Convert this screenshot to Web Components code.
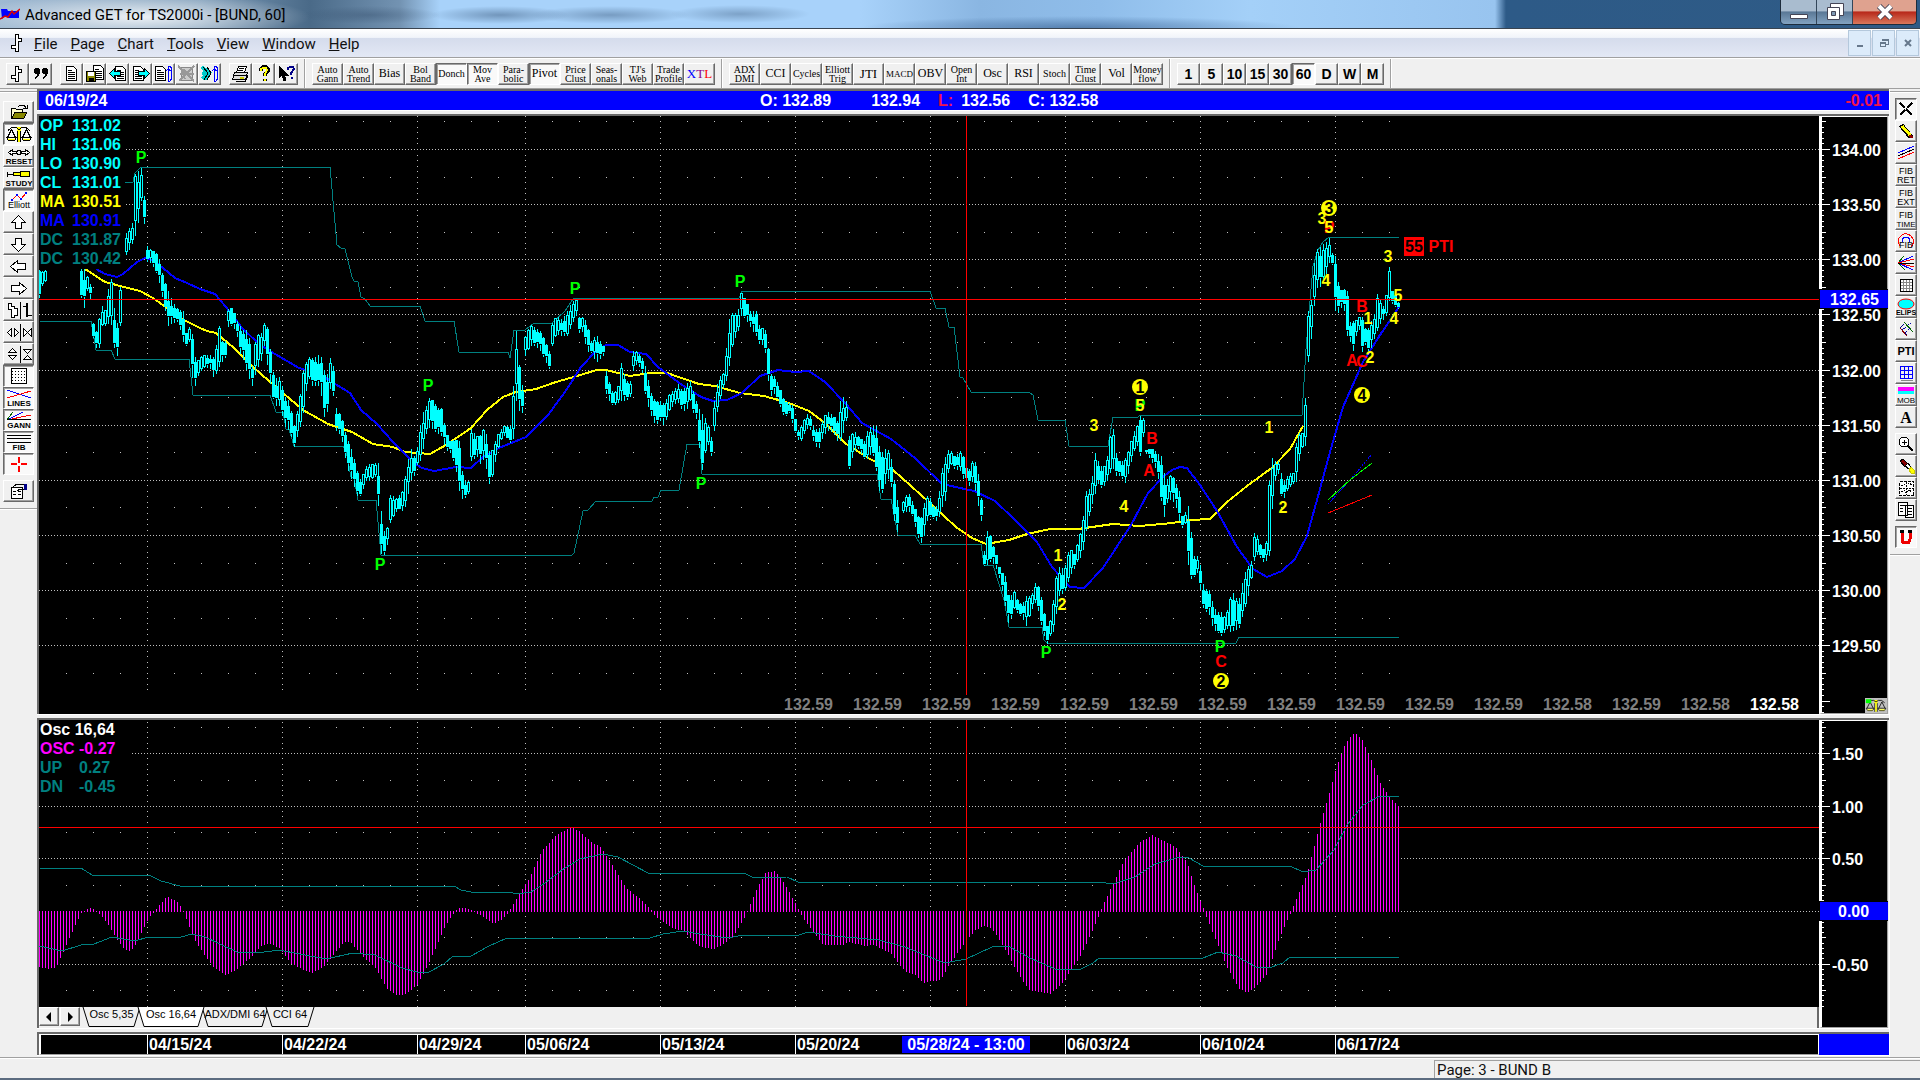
<!DOCTYPE html>
<html lang="en">
<head>
<meta charset="utf-8">
<title>Advanced GET for TS2000i - [BUND, 60]</title>
<style>
  html, body { margin: 0; height: 100%; background: #f0f0f0; overflow: hidden; }
</style>
</head>
<body>
<get-app></get-app>

<script>
/* ---------- icons ---------- */
const svg = (w, h, body) =>
  `<svg width="${w}" height="${h}" viewBox="0 0 ${w} ${h}" shape-rendering="crispEdges" fill="none" stroke="#000">${body}</svg>`;

const docShape = '<path d="M3.5 1.5h7l3 3v11h-10z" fill="#fff"/><path d="M5 5.5h4M5 7.5h7M5 9.5h7M5 11.5h7M5 13.5h7"/>';
const scales = '<path d="M12 2h4v4h-4z" fill="#ff0" stroke="none"/><path d="M3 5.5l4-3h4l3 2 3-2h4l4 3M12.5 6v11M15.5 6v11"/><path d="M14 5v12" stroke="#ff0" stroke-width="2"/><path d="M6.500 4.500L2.500 12.500M6.500 4.500l4 8M21.500 4.500l-4 8M21.500 4.500l4 8"/><path d="M1.500 12.500h10l-2 3h-6zM16.500 12.500h10l-2 3h-6z" fill="#ffc"/><path d="M3 14.500h7M18 14.500h7" stroke="#ff0"/>';
const barIcon = '<path d="M9.5 1.5h3v3h3v3h-3v9h-3v-3h-4v-3h4z" fill="#fff"/>';
const txt = (s, y, size, color = '#000', weight = 400) =>
  `<text x="50%" y="${y}" text-anchor="middle" stroke="none" fill="${color}" font-family="Liberation Sans, sans-serif" font-size="${size}" font-weight="${weight}">${s}</text>`;

const ICONS = {
  bar: svg(20, 18, `<g transform="translate(-2 0)">${barIcon}</g>`),
  quotes: svg(20, 18, '<g stroke="none" fill="#000"><circle cx="6" cy="6" r="3"/><path d="M9 6q0 6-5 8v-2q3-2 2-5z"/><circle cx="14" cy="6" r="3"/><path d="M17 6q0 6-5 8v-2q3-2 2-5z"/></g>'),
  page: svg(17, 18, docShape),
  save: svg(20, 18, `<g transform="translate(5 -1)">${docShape}</g><path d="M1.500 6.500h9v10h-9z" fill="#880"/><path d="M3 7h6v4H3z" fill="#fff" stroke="none"/><path d="M4 13h5v3H4z" fill="#000" stroke="none"/>`),
  back: svg(20, 18, `<g transform="translate(4 0)">${docShape}</g><path d="M1.500 8.500l5-5v3h6v4h-6v3z" fill="#0ff"/>`),
  next: svg(20, 18, `<g transform="translate(-1 0)">${docShape}</g><path d="M18.500 8.500l-5-5v3h-6v4h6v3z" fill="#0ff"/>`),
  turn: svg(20, 18, `<g transform="translate(-2 0)">${docShape}</g><path d="M14.500 1v16M17.500 4v9M14 1h2l2 3M14 16h2l2-3M12 6l2-2 3 2" stroke="#00f"/>`),
  scratch: svg(20, 18, '<path d="M4.500 2.500h11v13h-11z" fill="#ccc" stroke="#888"/><path d="M1 1l16 15M17 1L2 16M3 9h14M6 4l8 9M5 6l3 8" stroke="#999" stroke-width="2"/>'),
  turn2: svg(20, 18, '<path d="M2 2l6 6-6 6M6 3l4 5-5 7M2 8h8M4 4v10" stroke="#0cc" stroke-width="3"/><path d="M3 2l5 6-4 7M7 2l4 6-4 7"/><path d="M14.500 1v16M17.500 4v9M14 1h2l2 3M14 16h2l2-3M12 6l2-2 3 2" stroke="#00f"/>'),
  print: svg(20, 18, '<path d="M7.500 1.500h8l-2 6h-8z" fill="#fff"/><path d="M3.500 7.500h13l-2 7h-13z" fill="#ddd"/><path d="M3 10.500h12M8 3.500h5M7 5.500h5M5 16.500h9l3-6"/><path d="M9 13h4" stroke="#cc0" stroke-width="2"/>'),
  help: svg(16, 18, '<path d="M5 6V4l2-2h3l2 2v2l-3 3v2M8.500 14v2" stroke-width="4"/><path d="M5 6V4l2-1h3l1 2-2 4v2M8.500 14v2" stroke="#ff0" stroke-width="2"/>'),
  what: svg(20, 18, '<path d="M2 1v12l3-3 2 6 2-1-2-5h4z" fill="#000"/><path d="M11 5V3l2-1h3l1 2-3 4v2M14.500 12v2" stroke="#008" stroke-width="2"/>'),

  open: svg(24, 18, '<path d="M4.500 5.500h4l1 1h6v8h-11z" fill="#ffc"/><path d="M5 15l3-6h12l-3 6z" fill="#880"/><path d="M11 4l2-2h4l2 3M16 5h4V2"/>'),
  scales: svg(28, 18, scales),
  reset: svg(28, 18, '<path d="M3.500 5.500l4-3v2h4v2h-4v2zM24.500 5.500l-4-3v2h-4v2h4v2z" fill="#fff"/><circle cx="14" cy="5.500" r="2"/>' + txt('RESET', 17, 8, '#000', 700)),
  study: svg(28, 18, '<path d="M2 5.500h8"/><path d="M8.500 3.500h7v3h-7zM15.500 2.500h9v5h-9z" fill="#ff0"/><path d="M2.500 3v5"/>' + txt('STUDY', 17, 8, '#000', 700)),
  elliott: svg(28, 18, '<path d="M7 9l5-5 4 4 5-6" stroke="#f00"/><path d="M6 8h2v2H6zM11 3h2v2h-2zM15 7h2v2h-2zM20 1h2v2h-2z" fill="#00f" stroke="none"/>' + txt('Elliott', 17, 9)),
  up: svg(24, 18, '<path d="M11.500 2.500l7 7h-4v6h-6v-6h-4z" fill="#fff"/>'),
  down: svg(24, 18, '<path d="M11.500 16.500l7-7h-4v-6h-6v6h-4z" fill="#fff"/>'),
  left: svg(24, 18, '<path d="M3.500 9.500l7-6v3h8v6h-8v3z" fill="#fff"/>'),
  right: svg(24, 18, '<path d="M19.500 9.500l-7-6v3h-8v6h8v3z" fill="#fff"/>'),
  bars: svg(28, 18, '<path d="M3.500 2.500h3v3h3v2h3v7h-3v2h-3v-8h-3z" fill="#fff"/><path d="M15.500 1v17"/><path d="M22 2v14" stroke-width="2"/><path d="M18 5.500h4M23 14.500h4"/>'),
  squeeze: svg(28, 18, '<path d="M6.500 5.500v8l-4-4zM9.500 5.500v8l4-4zM18.500 5.500v8l4-4zM26.500 5.500v8l-4-4z" fill="#fff"/><path d="M15.500 1v17"/>'),
  squeezeV: svg(28, 18, '<path d="M3.500 7.500h8l-4-4zM3.500 10.500h8l-4 4zM18.500 4.500h8l-4 4zM18.500 14.500h8l-4-4z" fill="#fff"/><path d="M15.500 1v17"/>'),
  dots: svg(20, 18, '<path d="M2.500 1.500h15v15h-15z" fill="#fff"/><path d="M3 4.500h14M3 7.500h14M3 10.500h14M3 13.500h14" stroke-dasharray="1 2"/>'),
  lines: svg(28, 18, '<path d="M2 1l24 8" stroke="#00f"/><path d="M2 9L26 2" stroke="#f00"/>' + txt('LINES', 17, 8, '#000', 700)),
  gann: svg(28, 18, '<path d="M2 9L8 1" stroke="#060"/><path d="M2 9L18 1" stroke="#00f"/><path d="M2 9l24-5" stroke="#f00"/><path d="M2 8.500h24"/>' + txt('GANN', 17, 8, '#000', 700)),
  fib: svg(28, 18, '<path d="M2 2.500h24M2 5.500h24M2 9.500h24"/>' + txt('FIB', 17, 8, '#000', 700)),
  cross: svg(20, 18, '<path d="M10 2v6M10 11v6M2 9h6M12 9h6" stroke="#f00" stroke-width="2"/>'),
  props: svg(24, 18, '<path d="M4.500 5.500h11v11h-11z" fill="#fff"/><path d="M6 9.500h3M6 12.500h3M11 9.500h3M11 12.500h3M6 5l4-3h7v5h-4l-3 2"/><path d="M17 2h2v5h-2z" fill="#008" stroke="#008"/>'),

  crosshair: svg(16, 18, '<path d="M2 3l5 5M14 3L9 8M2 15l5-5M14 15l-5-5" stroke-width="2"/><path d="M8 8v2" stroke-width="1"/>'),
  pencil: svg(16, 18, '<path d="M3 3l10 12" stroke-width="5"/><path d="M4 4l8 9" stroke="#ff0" stroke-width="3"/><path d="M12 13l2 3" stroke="#800" stroke-width="3"/>'),
  channel: svg(18, 18, '<path d="M1 9l16-7" stroke="#00f"/><path d="M1 12l16-7"/><path d="M1 15l16-7" stroke="#f00"/>'),
  fibRet: svg(20, 19, txt('FIB', 8, 9) + txt('RET', 17, 9)),
  fibExt: svg(20, 19, txt('FIB', 8, 9) + txt('EXT', 17, 9)),
  fibTime: svg(20, 19, txt('FIB', 8, 9) + txt('TIME', 17, 8)),
  fibArc: svg(18, 18, '<path d="M3 14Q-1 7 5 3q5-3 9 1 5 5 0 11" stroke="#f00"/><path d="M5 10q0-5 4-5t4 5" stroke="#00f"/>' + txt('FIB', 16, 9)),
  fan: svg(18, 18, '<path d="M1 9L7 2M1 9l7 7" stroke="#060"/><path d="M1 9l15-7M1 9l15 7" stroke="#00f"/><path d="M1 9l16-4M1 9l16 4" stroke="#f00"/><path d="M1 9.500h16"/>'),
  grid: svg(16, 18, '<path d="M2.500 3.500h12v12h-12z" fill="#fff"/><path d="M5.500 4v11M8.500 4v11M11.500 4v11M3 6.500h11M3 9.500h11M3 12.500h11" stroke="#888"/>'),
  elips: svg(20, 18, '<ellipse cx="10" cy="6" rx="8" ry="5" fill="#0ff" stroke="#f00" shape-rendering="auto"/>' + txt('ELIPS', 17, 7, '#000', 700)),
  fork: svg(18, 18, '<path d="M3 8l4-4M3 8l7 7" stroke="#008"/><path d="M7 2l9 10" stroke="#060"/><path d="M3 8l7 8" stroke="#800"/><path d="M5 10l9-7M8 13l6-6" stroke="#00a" stroke-dasharray="1 1"/>'),
  pti: svg(20, 18, txt('PTI', 13, 11, '#000', 700)),
  blueGrid: svg(18, 18, '<path d="M3.500 2.500h12v12h-12zM7.500 3v11M11.500 3v11M4 6.500h11M4 10.500h11" stroke="#00f"/><path d="M4 16.500h12" stroke="#888"/>'),
  mob: svg(20, 18, '<path d="M2 1h16v4H2z" fill="#f0f" stroke="none"/><path d="M2 5h16v3H2z" fill="#0ff" stroke="none"/>' + txt('MOB', 17, 8)),
  text: svg(18, 18, '<text x="9" y="15" text-anchor="middle" stroke="none" fill="#000" font-family="Liberation Serif, serif" font-weight="700" font-size="16">A</text>'),
  zoom: svg(18, 18, '<circle cx="7" cy="7" r="5" fill="#fff"/><path d="M5 7.500h5M7.500 5v5"/><path d="M11 11l5 5" stroke-width="2"/>'),
  eraser: svg(18, 18, '<path d="M3 4l3-2 5 5-3 3z" fill="#800"/><path d="M8 9l3-3 3 4-2 2z" fill="#fff"/><path d="M12 13l2-3 3 3v3h-3z" fill="#ff0" stroke="#cc0"/>'),
  tiles: svg(18, 18, '<path d="M2.500 2.500h14v14h-14z" fill="#fff" stroke-dasharray="3 1"/><path d="M4 7l3-2 2 2 3-3 3 2M4 13l3-2 2 3 3-3 3 2M9.500 3v13M3 9.500h13" stroke-dasharray="2 1"/>'),
  copy: svg(18, 18, '<path d="M1.500 1.500h9v13h-9zM8.500 4.500h8v12h-8z" fill="#fff"/><path d="M3 5l3-1 3 1M3 8l3-1M3 11l3-1M10 8l5-1M10 11l5-1M10 14l5-1"/>'),
  magnet: svg(18, 18, '<path d="M5 4v7q0 4 4 4t4-4V4" stroke="#e00" stroke-width="3"/><path d="M3 3h4M11 3h4" stroke-width="3"/>')
};

/* ---------- base ---------- */
class GetElement extends HTMLElement {
  constructor() {
    super();
    const t = document.createElement('template');
    t.innerHTML = this.template();
    this.attachShadow({ mode: 'open' }).appendChild(t.content.cloneNode(true));
  }
  $(sel) { return this.shadowRoot.querySelector(sel); }
}

/* ---------- toolbar button ---------- */
class ToolButton extends GetElement {
  template() {
    return `
    <style>
      :host { display: block; width: 31px; height: 22px; }
      :host([size="small"]) { width: 23px; }
      :host([size="side"]) { width: 22px; }
      button {
        box-sizing: border-box; width: 100%; height: 100%; margin: 0; padding: 0;
        display: flex; align-items: center; justify-content: center;
        overflow: hidden; color: #000; background: #f0f0f0; text-align: center;
        font: 10px/9px "Liberation Serif", serif;
        border: 1px solid; border-color: #fff #696969 #696969 #fff;
        box-shadow: inset -1px -1px #a0a0a0;
      }
      :host([size="small"]) button { font: bold 14px/16px "Liberation Sans", sans-serif; }
      :host([pressed]) button {
        background: #f9f9f9; border-color: #696969 #fff #fff #696969; box-shadow: inset 1px 1px #a0a0a0;
      }
    </style>
    <button type="button"><slot></slot></button>`;
  }
  connectedCallback() {
    const b = this.$('button');
    b.setAttribute('aria-label', this.getAttribute('label') || '');
    if (this.hasAttribute('pressed')) b.setAttribute('aria-pressed', 'true');
  }
}
customElements.define('tool-button', ToolButton);

const iconButtons = (list, size = '') => list.map(name => {
  if (name === '|') return '<i class="gap"></i>';
  const on = name.startsWith('*');
  const key = name.replace('*', '');
  return `<tool-button label="${key}" ${size && `size="${size}"`} ${on ? 'pressed' : ''}>${ICONS[key]}</tool-button>`;
}).join('');

const textButtons = (list, size = '') => list.map(s => {
  const on = s.startsWith('*');
  const label = s.replace('*', '');
  return `<tool-button label="${label.replace(/<[^>]+>/g, '').replace('~', ' ')}" ${size && `size="${size}"`} ${on ? 'pressed' : ''}><span>${label.replace('~', '<br>')}</span></tool-button>`;
}).join('');

/* ---------- title bar ---------- */
class TitleBar extends GetElement {
  template() {
    return `
    <style>
      :host {
        display: flex; height: 28px; border-bottom: 1px solid #3a4450; align-items: center;
        font: 15px/24px Roboto, sans-serif; color: #000;
        background:
          radial-gradient(ellipse 170px 24px at 140px 17px, rgba(255,255,255,.85), rgba(255,255,255,0)),
          radial-gradient(ellipse 70px 9px at 370px 15px, rgba(50,75,105,.4), transparent),
          radial-gradient(ellipse 70px 9px at 500px 15px, rgba(60,90,125,.5), transparent),
          radial-gradient(ellipse 80px 9px at 610px 15px, rgba(60,90,125,.45), transparent),
          radial-gradient(ellipse 70px 9px at 740px 14px, rgba(60,90,125,.4), transparent),
          radial-gradient(ellipse 220px 12px at 1080px 28px, rgba(40,80,130,.55), transparent),
          linear-gradient(90deg, #9fb9d2 0, #7d9cb8 200px, #4a6a88 310px, #7393b2 400px, #a8d2fa 440px, #a8d2fa 860px, #8ab6e2 980px, #8fbdea 1100px, #a4d0f8 1250px, #98c4ef 1495px, #2d5a87 1506px, #2f5b86 100%);
      }
      svg { margin-right: 5px; }
      h1 { flex: 1; margin: 0; padding-top: 2px; font: inherit; }
      .win { display: flex; align-self: flex-start; height: 24px; margin-right: 3px; border: 1px solid #1d2c3c; border-top: 0; border-radius: 0 0 5px 5px; overflow: hidden; }
      button { padding: 0; border: 0; border-right: 1px solid #33465a; width: 36px; background: linear-gradient(#a9bccf 0 45%, #5a7896 50%, #83a3c1); display: flex; align-items: center; justify-content: center; }
      .win svg { margin: 0; }
      button.x { width: 63px; border: 0; background: linear-gradient(#dfa28f 0 45%, #b8281a 50%, #d9785c); }
    </style>
    <svg width="20" height="14" viewBox="0 0 20 14"><path d="M1 2h6l1 2h11v7H8l-3-2-3 3z" fill="#00f"/><path d="M0 12l5-3 3 1 4-6 2 3 6-5" stroke="#d00" stroke-width="1.500" fill="none"/></svg>
    <h1>Advanced GET for TS2000i - [BUND, 60]</h1>
    <div class="win">
      <button type="button" aria-label="Minimize"><svg width="20" height="16"><path d="M1.500 10.500h17v4h-17z" fill="#fff" stroke="#445"/></svg></button>
      <button type="button" aria-label="Restore"><svg width="22" height="20"><path d="M6.500 1.500h13v12h-13z" fill="#fff" stroke="#445"/><path d="M3.500 5.500h12v12h-12z" fill="#fff" stroke="#445"/><path d="M7.500 9.500h4v4h-4z" fill="#7f9ab5" stroke="#445"/></svg></button>
      <button type="button" class="x" aria-label="Close"><svg width="22" height="18"><path d="M5 3l12 12M17 3L5 15" stroke="#445" stroke-width="6"/><path d="M5 3l12 12M17 3L5 15" stroke="#fff" stroke-width="4"/></svg></button>
    </div>`;
  }
}
customElements.define('title-bar', TitleBar);

/* ---------- menu ---------- */
class MenuBar extends GetElement {
  template() {
    const items = ['File', 'Page', 'Chart', 'Tools', 'View', 'Window', 'Help'];
    return `
    <style>
      :host {
        display: flex; height: 28px; border-bottom: 1px solid #a0a0a0; align-items: center;
        background: linear-gradient(#fff 0, #f1f4fa 30%, #d5dcec 34%, #e3e8f5 100%);
      }
      svg.mdi { margin: 0 8px 0 7px; }
      nav { flex: 1; display: flex; gap: 13px; padding-top: 2px; }
      nav button { padding: 0; border: 0; background: none; color: #111; font: 15px/24px Roboto, sans-serif; }
      .mdi-win { display: flex; gap: 1px; margin-right: 1px; }
      .mdi-win button { width: 23px; height: 26px; padding: 0; border: 1px solid #b4c8dc; background: #dcebfa; display: flex; align-items: center; justify-content: center; }
    </style>
    <svg class="mdi" width="19" height="20" viewBox="0 0 19 20" shape-rendering="crispEdges"><path d="M8.500 1.500h3v4h3v3h-3v10h-3v-3h-4v-3h4z" fill="#fff" stroke="#000"/></svg>
    <nav>${items.map(s => `<button type="button"><u>${s[0]}</u>${s.slice(1)}</button>`).join('')}</nav>
    <div class="mdi-win">
      <button type="button" aria-label="Minimize window"><svg width="12" height="12"><path d="M3 9h6" stroke="#66788c" stroke-width="2"/></svg></button>
      <button type="button" aria-label="Restore window"><svg width="12" height="12" fill="none" stroke="#66788c" shape-rendering="crispEdges"><path d="M4.500 4V2.500h6v5H8M2.500 5.500h5v4h-5zM2 6.500h6M4 3.500h6"/></svg></button>
      <button type="button" aria-label="Close window"><svg width="12" height="12"><path d="M3 3l6 6M9 3L3 9" stroke="#66788c" stroke-width="2"/></svg></button>
    </div>`;
  }
}
customElements.define('menu-bar', MenuBar);

/* ---------- top toolbar ---------- */
class TopToolbar extends GetElement {
  template() {
    return `
    <style>
      :host { display: flex; height: 29px; align-items: center; background: #f0f0f0; border-top: 1px solid #fff; border-bottom: 1px solid #a0a0a0; }
      .group { display: flex; align-items: center; height: 29px; padding: 0 6px 0 7px; border-right: 1px solid #a0a0a0; box-shadow: 1px 0 #fff; }
      .group:first-of-type { padding-left: 6px; }
      .gap { width: 8px; }
      b { font-weight: 400; font-size: 13px; }
      .l { font-size: 13px; } .m { font-size: 12px; } .s { font-size: 9px; }
    </style>
    <div class="group">${iconButtons(['bar', 'quotes', '|', 'page', 'save', 'back', 'next', 'turn', 'scratch', 'turn2', '|', 'print', 'help', 'what'], 'small')}</div>
    <div class="group">${textButtons(['Auto~Gann', 'Auto~Trend', '<span class="m">Bias</span>', 'Bol~Band', '*Donch', '*Mov~Ave', 'Para-~bolic', '*<span class="m">Pivot</span>', 'Price~Clust', 'Seas-~onals', "TJ's~Web", 'Trade~Profile', '<b><span style="color:#00f">X</span><span style="color:#808">T</span><span style="color:#f00">L</span></b>'])}</div>
    <div class="group">${textButtons(['ADX~DMI', '<span class="m">CCI</span>', 'Cycles', 'Elliott~Trig', '<span class="l">JTI</span>', '<span class="s">MACD</span>', '<span class="m">OBV</span>', 'Open~Int', '<span class="m">Osc</span>', '<span class="m">RSI</span>', 'Stoch', 'Time~Clust', '<span class="m">Vol</span>', 'Money~flow'])}</div>
    <div class="group">${textButtons(['1', '5', '10', '15', '30', '*60', 'D', 'W', 'M'], 'small')}</div>`;
  }
}
customElements.define('top-toolbar', TopToolbar);

/* ---------- side toolbars ---------- */
class SideToolbar extends GetElement {
  template() {
    return `
    <style>
      :host { display: block; background: #f0f0f0; }
      div { display: flex; flex-direction: column; padding: 9px 0 6px 3px; margin-top: 2px; border-top: 1px solid #a0a0a0; border-bottom: 1px solid #a0a0a0; box-shadow: 0 1px #fff, inset 0 1px #fff; }
      :host([side="right"]) div { padding: 6px 0 6px 5px; }
      .gap { height: 5px; }
    </style>
    <div></div>`;
  }
  connectedCallback() {
    const left = ['open', '*scales', 'reset', 'study', '*elliott', 'up', 'down', 'left', 'right', 'bars', 'squeeze', 'squeezeV', '*dots', '*lines', '*gann', '*fib', '*cross', '|', 'props'];
    const right = ['*crosshair', 'pencil', 'channel', 'fibRet', 'fibExt', 'fibTime', 'fibArc', 'fan', 'grid', 'elips', 'fork', 'pti', 'blueGrid', 'mob', 'text', '|', 'zoom', 'eraser', 'tiles', 'copy', '|', '*magnet'];
    const isRight = this.getAttribute('side') === 'right';
    this.$('div').innerHTML = iconButtons(isRight ? right : left, isRight ? 'side' : '');
  }
}
customElements.define('side-toolbar', SideToolbar);

/* ---------- quote bar ---------- */
class QuoteBar extends GetElement {
  template() {
    return `
    <style>
      :host { display: flex; height: 19px; padding: 0 7px 0 6px; background: #00f; color: #fff; font: bold 16px/19px "Liberation Sans", sans-serif; white-space: pre; }
      .date { width: 715px; }
      .red { color: #f0144b; }
      .high { margin-left: 40px; }
      .l { margin-left: 18px; }
      .low { margin-left: 8px; }
      .close { margin-left: 18px; }
      .end { margin-left: auto; }
    </style>
    <time class="date">06/19/24</time>
    <span>O: 132.89</span><span class="high">132.94</span><span class="red l">L:</span><span class="low">132.56</span><span class="close">C: 132.58</span><span class="red end">-0.01</span>`;
  }
}
customElements.define('quote-bar', QuoteBar);

/* ---------- chart data, in chart units of one pixel ---------- */
const WEEKS = [
  [147, '04/15/24'], [282, '04/22/24'], [417, '04/29/24'], [525, '05/06/24'], [660, '05/13/24'],
  [795, '05/20/24'], [930, ''], [1065, '06/03/24'], [1200, '06/10/24'], [1335, '06/17/24']
];
const CURSOR_X = 966;

// x high low; a slash starts a new session after a gap
const BARS = `39 269 297,43 270 281,46 269 281/81 268 297,84 268 307,87 275 290,91 285 301/93 322 337,97 332 350,100 310 345,102 305 325,106 310 325,109 277 322,112 278 325,115 322 358,118 322 354,121 268 310
/126 232 254,132 222 243,135 173 235,138 170 222,141 167 200,144 195 223/147 245 261,151 249 262,155 250 269,159 258 282,163 277 300,168 290 325,173 302 322,178 308 321,183 310 341,186 332 345,190 324 340,193 338 395,196 365 380,199 356 372,205 354 366,210 354 368,214 356 378,219 325 366,222 340 361,226 340 355
/228 308 326,232 306 325,236 318 330,240 325 353,244 330 361,248 328 376,252 365 385,256 333 370,261 332 360,264 322 345,268 327 370,272 368 395,275 378 405,280 375 405,284 395 425,289 400 430,294 425 446,299 400 430,303 370 412,308 355 375,312 357 385,316 355 385,320 352 385,323 365 415,326 378 418,330 357 388,333 365 395
/336 407 430,341 415 435,344 428 452,348 440 470,352 450 480,357 470 495,361 480 495,365 465 480,370 463 480,376 462 475,379 462 520,381 510 553,384 530 554,388 524 540/390 494 522,397 497 509,402 490 510,406 470 505,410 445 480,414 455 475,418 443 460,421 415 460,425 407 435,430 395 425,434 402 430,438 407 433,442 407 435,445 430 448,450 440 452,455 438 465,459 440 490,463 480 500,468 480 493
/471 428 460,477 435 456,481 433 465,484 425 456,487 437 474,490 456 488,493 445 470,499 430 442,504 425 435,511 425 443,514 365 435,516 330 400,520 375 413,522 384 412/525 335 355,530 323 345,535 327 345,540 330 350,545 340 360,549 350 368/552 322 345,556 315 333,562 318 335,567 310 335,571 302 325,576 298 315/580 316 332,583 316 330,586 320 350,591 340 352,596 333 362,603 345 355
/606 370 393,610 385 402,613 393 405,618 385 402,621 362 400,626 380 400,631 380 395/633 350 370,637 350 362,642 357 372,646 367 400,650 390 412,655 400 425,660 400 420,664 402 425,669 393 410,674 388 403,678 383 402,682 390 410,686 383 410,690 380 400,693 390 412,697 403 420,701 412 474,707 420 441,712 440 458/714 400 430,718 377 405,723 372 387,728 330 375,730 306 355,733 315 342,738 308 330,741 292 315,745 298 318,750 310 326,756 310 335,760 328 345,764 326 342,767 335 372,770 372 395,774 375 393,778 383 400,784 400 417,789 402 412,793 405 425,797 430 438,801 425 440,805 415 430,809 411 425,813 425 440,818 430 450,823 417 435,827 410 430,833 415 432,837 420 440,841 393 440,846 400 420
/849 435 468,854 430 450,858 435 448,864 440 458,868 427 458,872 425 450,877 425 475,880 455 498,884 447 485,890 450 475,894 480 520,898 505 535/903 500 512,908 490 510,912 500 515,916 510 530,920 520 544,924 502 535,928 492 515,933 505 518,938 505 522,940 475 510,945 456 500,949 446 462,954 455 468,960 450 470,964 457 480,969 468 485,973 457 480,977 465 500,981 497 520/984 550 565,988 523 563,991 540 560,995 550 565,1000 570 580,1005 575 605,1009 600 627,1013 588 607,1018 600 613,1022 603 617,1026 595 625,1031 595 610,1036 579 600,1040 590 620,1044 612 635,1047 625 643,1051 617 632,1054 590 630,1057 567 605,1060 566 590,1063 567 595,1066 562 588,1069 546 577,1074 553 568,1078 540 558,1082 523 555,1086 490 530,1091 487 505,1094 450 500,1097 457 480,1100 465 488,1104 465 485,1108 452 478,1112 417 465,1115 450 475,1120 462 475,1125 457 482,1129 447 470,1133 432 452,1137 425 445,1140 415 455,1143 417 436
/1147 449 453,1152 448 462,1157 452 470,1161 455 500,1164 472 516,1168 480 497,1171 471 500,1175 480 502,1179 490 520,1182 515 527,1186 510 522,1189 502 585,1192 545 575,1195 560 577,1198 552 570,1201 570 598,1204 590 612,1208 585 610,1212 600 625,1216 610 632,1219 612 632,1222 610 637,1225 618 630,1228 605 627,1231 592 633,1234 592 628,1237 600 630,1240 595 625,1243 575 612,1247 567 600,1251 560 578/1254 532 560,1258 535 552,1262 550 562,1265 545 560,1267 535 560,1270 452 553,1273 460 485,1277 460 473/1281 472 495,1284 480 497,1287 475 490,1292 470 483,1294 475 483,1297 425 480,1300 435 450,1303 430 445,1306 380 445,1308 310 361,1312 295 330,1314 262 305,1317 248 287,1321 245 285,1323 243 280,1327 240 270,1329 237 262,1332 252 264,1335 255 310,1339 290 312,1343 287 302,1347 290 335,1348 310 342,1351 327 341,1353 320 350,1357 318 330,1360 315 328,1362 316 351,1366 330 342,1368 327 350,1371 320 347,1375 310 335,1378 284 328,1381 305 320,1384 305 318,1387 288 313,1389 266 300,1392 290 303,1396 295 307,1399 304 309`;

const DONCH_UP = '125,182 133,182 135,173 141,167 330,167 337,245 341,248 345,249 352,277 354,281 358,282 361,297 365,299 370,306 420,306 425,321 454,321 459,352 508,352 510,358 514,330 525,330 534,323 552,323 565,311 573,299 577,298 739,298 742,291 930,291 936,308 945,308 949,327 954,327 960,377 963,378 971,392 1029,392 1033,395 1038,420 1065,420 1069,446 1108,446 1113,417 1138,417 1140,415 1302,415 1306,349 1313,266 1318,250 1323,242 1329,237 1399,237';
const DONCH_DN = '40,321 91,321 96,350 111,350 115,359 189,359 193,395 270,395 276,412 283,412 286,429 289,429 294,446 343,446 346,450 351,477 354,477 358,500 376,500 381,555 572,555 574,553 583,511 588,510 596,501 652,501 654,497 658,497 661,490 679,490 687,444 700,444 702,474 877,474 881,499 891,499 898,535 915,535 920,544 981,544 984,565 993,565 1004,600 1009,627 1042,627 1044,640 1047,643 1236,643 1239,637 1399,637';
const MA_SLOW = '85,269 105,282 120,286 140,291 153,298 167,308 180,318 200,328 207,331 216,333 234,348 254,368 283,393 303,410 328,424 352,432 373,444 393,447 405,452 430,454 446,445 471,428 487,410 503,397 516,392 536,389 556,382 577,376 597,370 606,370 618,373 630,376 650,373 667,373 699,384 715,386 740,393 764,396 789,403 809,411 825,423 846,444 870,459 893,470 911,486 931,504 956,527 972,538 986,544 1009,540 1027,534 1050,529 1078,529 1113,524 1140,526 1172,523 1190,520 1210,519 1227,502 1247,486 1273,467 1290,449 1303,426';
const MA_FAST = '96,269 105,274 117,277 123,274 137,262 145,258 153,260 163,268 175,278 187,283 200,289 215,294 226,307 242,328 259,344 275,354 299,368 320,374 332,382 350,393 361,410 377,424 393,442 414,463 422,468 434,471 456,467 471,468 483,457 499,448 526,437 548,415 565,392 581,367 597,350 606,345 618,345 630,352 646,354 658,367 682,385 701,397 713,401 727,400 742,393 760,376 778,370 795,372 809,371 825,382 846,404 862,423 891,439 915,458 942,484 974,491 995,501 1013,518 1037,542 1052,567 1070,587 1084,588 1103,568 1131,525 1148,493 1164,476 1172,470 1180,467 1187,468 1200,485 1217,511 1237,547 1253,569 1267,577 1282,571 1295,559 1307,536 1317,500 1330,452 1343,407 1363,362 1380,335 1399,307';

const OSC = '39,966 48,968 56,966 62,953 69,937 76,922 80,913 91,907 99,913 107,922 116,938 123,947 130,951 136,942 142,930 149,916 154,911 161,903 167,896 178,903 184,913 190,928 196,942 205,955 214,967 225,974 237,968 250,957 261,945 269,942 279,947 290,962 299,967 312,972 324,965 333,954 344,941 350,941 362,955 375,967 386,987 395,994 404,994 417,984 426,967 435,948 444,927 451,915 458,908 466,908 473,911 482,915 493,923 502,918 509,911 518,895 529,878 542,850 556,835 565,830 572,827 580,832 591,842 600,847 609,860 625,887 641,900 650,909 658,918 672,927 683,930 696,943 702,946 713,948 722,944 733,935 741,922 747,911 756,890 765,873 774,871 780,877 789,892 800,913 812,930 823,944 843,944 847,941 865,945 874,944 890,952 905,971 914,973 923,982 932,980 940,979 950,962 966,940 975,929 983,925 992,928 1004,947 1019,975 1029,989 1039,991 1050,993 1062,982 1079,957 1093,928 1100,911 1111,887 1124,860 1140,842 1152,835 1162,840 1175,847 1187,863 1195,888 1204,911 1213,933 1227,967 1238,987 1247,992 1256,985 1267,973 1278,940 1288,917 1291,911 1307,873 1318,830 1327,800 1336,767 1345,743 1354,733 1361,738 1370,758 1381,785 1390,798 1399,807';
const OSC_UP = '40,868 81,868 92,875 149,875 161,881 180,886 454,886 461,890 471,892 509,892 517,894 531,892 545,883 562,870 580,859 603,854 618,857 648,873 744,873 754,878 787,877 798,882 1098,882 1113,884 1135,877 1155,864 1180,857 1189,858 1203,866 1290,866 1303,872 1316,870 1334,850 1347,825 1363,805 1380,796 1396,796 1399,797';
const OSC_DN = '39,946 62,951 81,945 94,944 112,937 134,941 149,937 181,937 192,934 205,937 237,952 257,953 279,950 326,959 353,953 375,955 402,968 417,972 429,972 444,964 453,956 471,956 489,946 507,938 650,938 663,934 683,931 700,934 727,938 744,935 799,935 808,932 834,936 879,940 905,947 932,958 945,963 966,959 992,947 1008,946 1030,958 1055,969 1079,970 1093,963 1099,958 1203,958 1218,952 1236,956 1256,967 1269,968 1283,963 1290,957 1399,957';

// text, x, y centre, colour
const G = '#00ff00', Y = '#ffff00', R = '#ff0000';
const MARKS = [
  ['P', 141, 157, G], ['P', 380, 564, G], ['P', 428, 385, G], ['P', 575, 288, G], ['P', 701, 483, G], ['P', 740, 281, G],
  ['P', 1046, 652, G], ['P', 1220, 646, G], ['P', 1140, 405, G], ['5', 1140, 405, Y],
  ['3', 1094, 425, Y], ['B', 1152, 438, R], ['A', 1149, 470, R], ['4', 1124, 506, Y], ['1', 1058, 555, Y], ['2', 1062, 604, Y],
  ['C', 1221, 661, R], ['1', 1269, 427, Y], ['2', 1283, 507, Y],
  ['3', 1322, 218, Y], ['P', 1329, 227, R], ['5', 1329, 227, Y], ['4', 1326, 280, Y], ['3', 1388, 256, Y], ['5', 1398, 295, Y], ['4', 1394, 318, Y],
  ['B', 1362, 306, R], ['1', 1368, 318, Y], ['A', 1352, 360, R], ['C', 1362, 361, R], ['2', 1370, 357, Y]
];
const RINGS = [['1', 1140, 387], ['2', 1221, 681], ['3', 1329, 208], ['4', 1362, 395]];

const LEFT = 39;

/* small seeded generator, keeps the bars the same on every load */
function rng(seed) {
  return () => (seed = (seed * 16807) % 2147483647) / 2147483647;
}

function lerpAt(pts, x) {
  for (let i = 1; i < pts.length; i++) {
    if (x <= pts[i][0]) {
      const a = pts[i - 1], b = pts[i];
      const t = Math.max(0, (x - a[0]) / (b[0] - a[0] || 1));
      return a.map((v, k) => v + (b[k] - v) * t);
    }
  }
  return pts[pts.length - 1];
}

function gridMarkup(yOf, values, ticks, top) {
  let out = '';
  values.forEach(v => {
    const y = Math.round(yOf(v)) - top;
    out += `<line x1="0" x2="100%" y1="${y}.5" y2="${y}.5" stroke="#c0c0c0" stroke-dasharray="1 2"/>`;
  });
  let d = '';
  ticks.forEach(t => {
    const y = Math.round(yOf(t)) - top;
    WEEKS.forEach(([x]) => { d += `M${x - LEFT} ${y}h1v1h-1z`; });
    if (Math.abs(Math.round(t * 100)) % 50 === 25) {
      for (let x = 66; x <= 1390; x += 27) d += `M${x - LEFT} ${y}h1v1h-1z`;
    }
  });
  return out + `<path d="${d}" fill="#c0c0c0"/>`;
}

const range = (from, to, step) => {
  const a = [];
  for (let i = 0; from + i * step <= to + 0.001; i++) a.push(Math.round((from + i * step) * 100) / 100);
  return a;
};

/* ---------- price pane ---------- */
const priceY = v => 149 + (134 - v) * 110.3;

class PriceChart extends GetElement {
  template() {
    const fades = ['59', '59', '59', '59', '59', '59', '59', '59', '59', '59', '59', '58', '59', '58', '58'];
    const rows = [['OP', '131.02', '#0ff'], ['HI', '131.06', '#0ff'], ['LO', '130.90', '#0ff'], ['CL', '131.01', '#0ff'],
      ['MA', '130.51', '#ff0'], ['MA', '130.91', '#00f'], ['DC', '131.87', '#008080'], ['DC', '130.42', '#008080']];
    return `
    <style>
      :host { display: block; position: relative; height: 598px; background: #000; font: bold 16px/19px "Liberation Sans", sans-serif; overflow: hidden; }
      svg { display: block; width: 100%; height: 100%; }
      dl { position: absolute; top: 0; left: 0; margin: 0; padding: 0 4px 1px 1px; display: grid; grid-template-columns: 32px 49px; background: #000; }
      dd { margin: 0; }
      .fades { position: absolute; right: 0; bottom: 0; display: flex; color: #808080; }
      .fades span { width: 69px; }
      .fades span:last-child { color: #fff; }
    </style>
    <svg></svg>
    <dl>${rows.map(([k, v, c]) => `<dt style="color:${c}">${k}</dt><dd style="color:${c}">${v}</dd>`).join('')}</dl>
    <div class="fades">${fades.map(f => `<span>132.${f}</span>`).join('')}</div>`;
  }

  connectedCallback() {
    const top = 116;
    this.$('svg').innerHTML = `
      <g shape-rendering="crispEdges">
        ${gridMarkup(priceY, range(129.5, 134, 0.5), range(129.1, 134.3, 0.05), top)}
        <g transform="translate(${-LEFT} ${-top})" fill="none">
          <polyline points="${DONCH_UP}" stroke="#008080"/>
          <polyline points="${DONCH_DN}" stroke="#008080"/>
          <polyline points="${MA_SLOW}" stroke="#ff0" stroke-width="2"/>
          <polyline points="${MA_FAST}" stroke="#00f" stroke-width="2"/>
          <polyline points="1328,513 1350,504 1372,495" stroke="#f00"/>
          <polyline points="1328,504 1350,480 1372,454" stroke="#00f" stroke-dasharray="2 1"/>
          <polyline points="1328,500 1350,480 1372,463" stroke="#0f0"/>
          ${this.candles()}
        </g>
        <line x1="0" x2="100%" y1="183.5" y2="183.5" stroke="#f00"/>
        <line x1="${CURSOR_X - LEFT}.5" x2="${CURSOR_X - LEFT}.5" y1="0" y2="579" stroke="#f00"/>
      </g>
      <g transform="translate(${-LEFT} ${-top})" text-anchor="middle">
        ${RINGS.map(([, x, y]) => `<circle cx="${x}" cy="${y}" r="8" fill="${Y}"/>`).join('')}
        ${RINGS.map(([t, x, y]) => `<text x="${x}" y="${y + 6}" fill="#000">${t}</text>`).join('')}
        ${MARKS.map(([t, x, y, c]) => `<text x="${x}" y="${y + 6}" fill="${c}">${t}</text>`).join('')}
        <rect x="1404" y="237" width="20" height="19" fill="#f00"/>
        <text x="1414" y="252" fill="#000">55</text>
        <text x="1441" y="252" fill="#f00">PTI</text>
      </g>`;
  }

  candles() {
    const rand = rng(2024);
    let wicks = '', solid = '', hollow = '';
    let last = 280;
    BARS.split('/').forEach(session => {
      const pts = session.trim().split(',').map(p => p.trim().split(' ').map(Number));
      const end = pts[pts.length - 1][0];
      for (let x = Math.round((pts[0][0] - 39) / 3) * 3 + 39; x <= end + 1; x += 3) {
        const [, hi, lo] = lerpAt(pts, x);
        const h = lo - hi;
        const t = Math.round(hi + h * (0.05 + rand() * 0.28));
        const b = Math.max(t + 2, Math.round(lo - h * (0.05 + rand() * 0.28)));
        const mid = (t + b) / 2;
        wicks += `M${x} ${Math.round(hi)}V${t}M${x} ${b}V${Math.round(lo)}`;
        if (mid > last - 1) solid += `M${x - 1} ${t}h3V${b}h-3z`;
        else hollow += `M${x - 1} ${t}h2V${b}h-2z`;
        last = mid;
      }
    });
    return `<g transform="translate(.5 .5)"><path d="${wicks}" stroke="#0ff"/><path d="${hollow}" stroke="#0ff" fill="#000"/></g><path d="${solid}" fill="#0ff"/>`;
  }
}
customElements.define('price-chart', PriceChart);

/* ---------- oscillator pane ---------- */
const oscY = v => 911 - v * 105.2;

class OscChart extends GetElement {
  template() {
    return `
    <style>
      :host { display: block; position: relative; height: 287px; background: #000; font: bold 16px/19px "Liberation Sans", sans-serif; overflow: hidden; }
      svg { display: block; width: 100%; height: 100%; }
      dl { position: absolute; top: 0; left: 0; margin: 0; padding: 0 8px 0 1px; display: grid; grid-template-columns: 39px 45px; background: #000; }
      dt:first-child { grid-column: span 2; }
      dd { margin: 0; }
    </style>
    <svg></svg>
    <dl>
      <dt style="color:#fff">Osc 16,64</dt>
      <dt style="color:#f0f">OSC</dt><dd style="color:#f0f">-0.27</dd>
      <dt style="color:#008080">UP</dt><dd style="color:#008080">0.27</dd>
      <dt style="color:#008080">DN</dt><dd style="color:#008080">-0.45</dd>
    </dl>`;
  }

  connectedCallback() {
    const top = 720;
    const pts = OSC.split(' ').map(p => p.split(',').map(Number));
    let bars = '';
    for (let x = 39; x <= 1399; x += 3) {
      const y = Math.round(lerpAt(pts, x)[1]);
      bars += y < 911 ? `M${x} ${y}h1V912h-1z` : `M${x} 911h1V${y + 1}h-1z`;
    }
    this.$('svg').innerHTML = `
      <g shape-rendering="crispEdges">
        ${gridMarkup(oscY, [1.5, 1, 0.5, 0, -0.5], range(-0.9, 1.8, 0.05), top)}
        <g transform="translate(${-LEFT} ${-top})" fill="none">
          <path d="${bars}" fill="#f0f"/>
          <polyline points="${OSC_UP}" stroke="#008080"/>
          <polyline points="${OSC_DN}" stroke="#008080"/>
        </g>
        <line x1="0" x2="100%" y1="107.5" y2="107.5" stroke="#f00"/>
        <line x1="${CURSOR_X - LEFT}.5" x2="${CURSOR_X - LEFT}.5" y1="0" y2="286" stroke="#f00"/>
      </g>`;
  }
}
customElements.define('osc-chart', OscChart);

/* ---------- value axis ---------- */
class ValueAxis extends GetElement {
  template() {
    return `
    <style>
      :host { display: block; box-sizing: border-box; background: #000; border: solid #fff; border-width: 1px 1px 1px 3px; border-right-color: #a0a0a0; border-bottom-color: #a0a0a0; margin-right: 1px; position: relative; }
      svg { position: absolute; left: -3px; top: -1px; display: block; overflow: visible; font: bold 16px/19px "Liberation Sans", sans-serif; }
      ::slotted(*) { position: absolute; right: 0; bottom: 0; }
    </style>
    <svg width="69" height="100%"></svg><slot></slot>`;
  }
  connectedCallback() {
    const price = this.getAttribute('kind') === 'price';
    const top = price ? 116 : 720;
    const yOf = price ? priceY : oscY;
    const ticks = price ? range(128.9, 134.25, 0.05) : range(-0.9, 1.8, 0.05);
    const labels = price ? range(129.5, 134, 0.5) : [1.5, 1, 0.5, -0.5];
    let d = '';
    ticks.forEach(t => {
      const c = Math.abs(Math.round(t * 100));
      const len = c % 50 === 0 ? 9 : c % 25 === 0 ? 5 : 3;
      d += `M2 ${Math.round(yOf(t)) - top}.5h${len}`;
    });
    const [hy, htext, hx] = price ? [174, '132.65', 11] : [182, '0.00', 19];
    this.$('svg').innerHTML = `
      <path d="${d}" stroke="#fff" shape-rendering="crispEdges"/>
      ${labels.map(v => `<text x="13" y="${Math.round(yOf(v)) - top + 7}" fill="#fff">${v.toFixed(2)}</text>`).join('')}
      <rect x="0" y="${hy - 1}" width="69" height="20" fill="#000"/><rect x="1" y="${hy}" width="68" height="18" fill="#00f"/>
      <text x="${hx}" y="${hy + 15}" fill="#fff">${htext}</text>`;
  }
}
customElements.define('value-axis', ValueAxis);

/* ---------- study tabs ---------- */
class StudyTabs extends GetElement {
  template() {
    return `
    <style>
      :host { display: flex; height: 21px; align-items: flex-start; background: #f0f0f0; border-right: 2px solid #696969; }
      .nav { width: 20px; height: 19px; padding: 0; background: #f0f0f0; border: 1px solid; border-color: #fff #696969 #696969 #fff; box-shadow: inset -1px -1px #a0a0a0; display: flex; align-items: center; justify-content: center; }
      .nav + .nav { margin: 0 2px 0 1px; }
      .tab { position: relative; height: 20px; padding: 0 0 4px; margin: 0 -4px 0 0; border: 0; background: none; font: 11px/15px "Liberation Sans", sans-serif; color: #000; white-space: nowrap; display: flex; justify-content: center; }
      .tab svg { position: absolute; inset: 0; width: 100%; height: 100%; }
      .tab span { position: relative; }
      .on { z-index: 1; }
    </style>
    <button class="nav" type="button" aria-label="Previous"><svg width="8" height="10"><path d="M6 0v10L1 5z"/></svg></button>
    <button class="nav" type="button" aria-label="Next"><svg width="8" height="10"><path d="M2 0v10l5-5z"/></svg></button>
    ${[['Osc 5,35', 59], ['Osc 16,64', 68], ['ADX/DMI 64', 68], ['CCI 64', 50]].map(([t, w], i) => `
      <button class="tab ${i === 1 ? 'on' : ''}" type="button" style="width:${w}px"><svg viewBox="0 0 ${w} 20" fill="${i === 1 ? '#fff' : '#f0f0f0'}" stroke="#000"><path d="M1 0l6 19.500h${w - 14}l6-19.500"/></svg><span>${t}</span></button>`).join('')}`;
  }
}
customElements.define('study-tabs', StudyTabs);

/* ---------- date axis ---------- */
class DateAxis extends GetElement {
  template() {
    return `
    <style>
      :host { display: block; box-sizing: border-box; height: 21px; background: #000; border: 1px solid #fff; border-width: 1px 1px 1px 2px; border-bottom-color: #a0a0a0; font: bold 16px/19px "Liberation Sans", sans-serif; }
      svg { display: block; width: 100%; height: 19px; overflow: hidden; }
    </style>
    <svg>
      ${WEEKS.filter(w => w[1]).map(([x, t]) => `<path d="M${x - LEFT - 2}.5 0v19" stroke="#fff" shape-rendering="crispEdges"/><text x="${x - LEFT}" y="15" fill="#fff">${t}</text>`).join('')}
      <rect x="861" y="1" width="128" height="17" fill="#00f"/><text x="925" y="15" text-anchor="middle" fill="#fff">05/28/24 - 13:00</text>
    </svg>`;
  }
}
customElements.define('date-axis', DateAxis);

/* ---------- status bar ---------- */
class StatusBar extends GetElement {
  template() {
    return `
    <style>
      :host { display: flex; justify-content: flex-end; box-sizing: border-box; height: 23px; padding-top: 2px; border-top: 1px solid #a0a0a0; box-shadow: inset 0 1px #fff; border-bottom: 2px solid #5c6c80; background: #f0f0f0; font: 15px/18px Roboto, sans-serif; color: #111; }
      span { box-sizing: border-box; width: 486px; padding-left: 2px; border: solid #a0a0a0; border-width: 1px 0 0 1px; }
    </style>
    <span>Page: 3 - BUND B</span>`;
  }
}
customElements.define('status-bar', StatusBar);

/* ---------- application ---------- */
class GetApp extends GetElement {
  template() {
    return `
    <style>
      :host { display: flex; flex-direction: column; min-height: 100vh; background: #f0f0f0; }
      main { flex: 1; display: grid; grid-template-columns: 37px minmax(0, 1fr) 30px; }
      .desk { display: flex; flex-direction: column; gap: 4px; border-right: 1px solid #fff; }
      section { display: grid; grid-template-columns: minmax(0, 1fr) 70px; border: solid #696969; border-width: 2px 0 0 2px; box-shadow: 0 1px #fff; }
      .quote { grid-template-columns: minmax(0, 1fr); }
      .mini { background: #c0c0c0; }
      .corner { background: #00f; }
    </style>
    <title-bar></title-bar>
    <menu-bar></menu-bar>
    <top-toolbar></top-toolbar>
    <main>
      <side-toolbar side="left"></side-toolbar>
      <div class="desk">
        <section class="quote"><quote-bar></quote-bar></section>
        <section>
          <price-chart></price-chart>
          <value-axis kind="price"><svg class="mini" width="22" height="15" viewBox="0 0 28 18" fill="none" stroke="#000">${scales}<path d="M1 1h7v5H1z" fill="#0f0" stroke="none"/></svg></value-axis>
        </section>
        <section>
          <div><osc-chart></osc-chart><study-tabs></study-tabs></div>
          <value-axis kind="osc"></value-axis>
        </section>
        <section>
          <date-axis></date-axis>
          <div class="corner"></div>
        </section>
      </div>
      <side-toolbar side="right"></side-toolbar>
    </main>
    <status-bar></status-bar>`;
  }
}
customElements.define('get-app', GetApp);
</script>
</body>
</html>
